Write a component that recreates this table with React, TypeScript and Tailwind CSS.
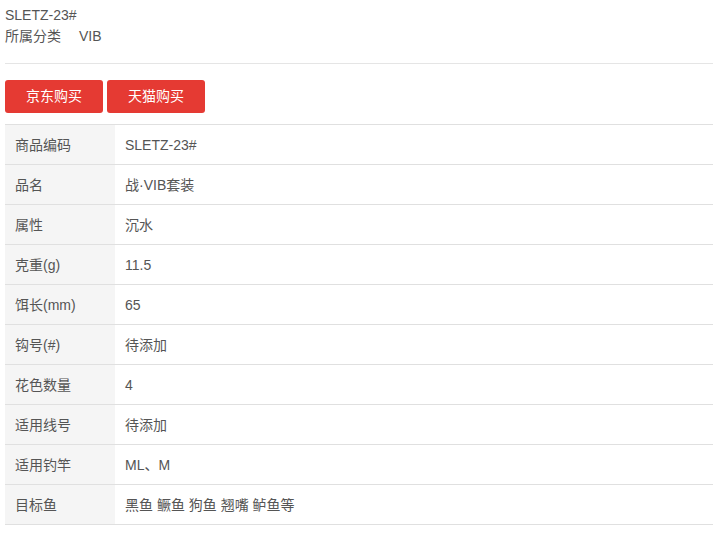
import React from 'react';

const specs: [string, string][] = [
  ['商品编码', 'SLETZ-23#'],
  ['品名', '战·VIB套装'],
  ['属性', '沉水'],
  ['克重(g)', '11.5'],
  ['饵长(mm)', '65'],
  ['钩号(#)', '待添加'],
  ['花色数量', '4'],
  ['适用线号', '待添加'],
  ['适用钓竿', 'ML、M'],
  ['目标鱼', '黑鱼 鳜鱼 狗鱼 翘嘴 鲈鱼等'],
];

export default function App() {
  return (
    <div
      className="min-h-screen bg-white pl-[5px] text-[14px] text-[#555]"
      style={{ fontFamily: '"Liberation Sans", "Noto Sans CJK SC", sans-serif' }}
    >
      {/* Header */}
      <div className="pt-[5px] pb-[16px] border-b border-[#e5e5e5]">
        <div className="leading-[20px]">SLETZ-23#</div>
        <div className="leading-[22px] flex">
          <span className="w-[74px]">所属分类</span>
          <span>VIB</span>
        </div>
      </div>

      {/* Buy buttons */}
      <div className="flex gap-[4px] pt-[16px] pb-[11px]">
        <button className="w-[98px] h-[33px] rounded-[3px] bg-[#e53a33] text-white text-[14px]">
          京东购买
        </button>
        <button className="w-[98px] h-[33px] rounded-[3px] bg-[#e53a33] text-white text-[14px]">
          天猫购买
        </button>
      </div>

      {/* Spec table */}
      <div className="border-t border-[#e0e0e0]">
        {specs.map(([k, v]) => (
          <div key={k} className="flex h-[40px] border-b border-[#e0e0e0]">
            <div className="w-[110px] bg-[#f5f5f5] pl-[10px] pt-[2px] flex items-center">{k}</div>
            <div className="pl-[10px] pt-[2px] flex items-center">{v}</div>
          </div>
        ))}
      </div>
    </div>
  );
}
